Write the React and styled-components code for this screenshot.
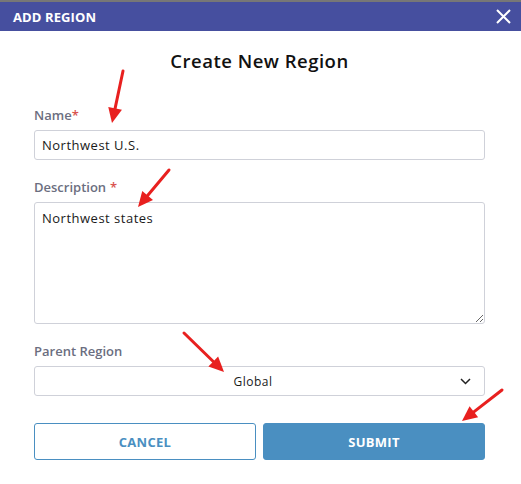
import React from "react";
import styled, { createGlobalStyle } from "styled-components";

const Global = createGlobalStyle`
  html, body { margin: 0; padding: 0; background: #fff; }
  body { font-family: "Open Sans", "Noto Sans", sans-serif; }
  * { box-sizing: border-box; }
`;

const Page = styled.div`
  position: relative;
  width: 521px;
  height: 484px;
  border-top: 2px solid #777;
  background: #fff;
`;

const Header = styled.div`
  height: 29px;
  background: #464f9f;
  display: flex;
  align-items: center;
  justify-content: space-between;
  padding: 0 10px 0 13px;
`;

const HeaderTitle = styled.div`
  color: #fff;
  font-size: 13px;
  font-weight: 700;
  letter-spacing: 0.1px;
`;

const CloseBtn = styled.button`
  background: none;
  border: 0;
  padding: 0;
  width: 16px;
  height: 16px;
  display: flex;
  align-items: center;
  justify-content: center;
  cursor: pointer;
`;

const Body = styled.div`
  padding: 18px 36px 0 34px;
  display: flex;
  flex-direction: column;
`;

const Title = styled.h1`
  margin: 0 0 34px;
  text-align: center;
  font-size: 18.5px;
  line-height: 24px;
  font-weight: 600;
  letter-spacing: 0.5px;
  color: #111;
`;

const Field = styled.div`
  display: flex;
  flex-direction: column;
  margin-bottom: ${(p) => p.$gap || 19}px;
`;

const Label = styled.label`
  font-size: 13px;
  line-height: 16px;
  font-weight: 600;
  color: #6b6e80;
  margin-bottom: 7px;
`;

const Req = styled.span`
  color: #d9534f;
  margin-left: ${(p) => (p.$space ? 4 : 0)}px;
`;

const controlBase = `
  width: 100%;
  border: 1px solid #cfd1d9;
  border-radius: 3px;
  font-family: "Open Sans", "Noto Sans", sans-serif;
  font-size: 13px;
  letter-spacing: 0.5px;
  color: #1a1a1a;
  background: #fff;
  outline: none;
`;

const Input = styled.input`
  ${controlBase}
  height: 30px;
  padding: 0 7px;
`;

const TextArea = styled.textarea`
  ${controlBase}
  height: 122px;
  padding: 6px 7px;
  resize: vertical;
  line-height: 18px;
`;

const Select = styled.div`
  ${controlBase}
  height: 30px;
  display: flex;
  align-items: center;
  padding: 0 13px 0 7px;
`;

const SelectValue = styled.div`
  flex: 1;
  text-align: center;
  font-size: 12px;
  padding-left: 4px;
`;

const Buttons = styled.div`
  display: grid;
  grid-template-columns: 1fr 1fr;
  gap: 7px;
`;

const Button = styled.button`
  height: 37px;
  border-radius: 3px;
  font-family: "Open Sans", "Noto Sans", sans-serif;
  font-size: 13px;
  font-weight: 700;
  letter-spacing: 0.3px;
  cursor: pointer;
  border: 1px solid #4a8fc1;
  background: ${(p) => (p.$primary ? "#4a8fc1" : "#fff")};
  color: ${(p) => (p.$primary ? "#fff" : "#4a8fc1")};
`;

const Overlay = styled.svg`
  position: absolute;
  left: 0;
  top: -2px;
  pointer-events: none;
`;

const arrows = [
  [123, 71, 112, 123],
  [169, 170, 138, 207],
  [184, 333, 224, 372],
  [502, 390, 462, 421],
];

function Arrow({ x1, y1, x2, y2 }) {
  const dx = x2 - x1;
  const dy = y2 - y1;
  const len = Math.hypot(dx, dy);
  const ux = dx / len;
  const uy = dy / len;
  const headLen = 15;
  const headW = 7;
  const bx = x2 - ux * headLen;
  const by = y2 - uy * headLen;
  const px = -uy;
  const py = ux;
  return (
    <g>
      <line x1={x1} y1={y1} x2={bx} y2={by} stroke="#e8201f" strokeWidth="3" strokeLinecap="round" />
      <polygon
        points={`${x2},${y2} ${bx + px * headW},${by + py * headW} ${bx - px * headW},${by - py * headW}`}
        fill="#e8201f"
      />
    </g>
  );
}

export default function App() {
  return (
    <>
      <Global />
      <Page>
        <Header>
          <HeaderTitle>ADD REGION</HeaderTitle>
          <CloseBtn aria-label="close">
            <svg width="15" height="15" viewBox="0 0 15 15">
              <path d="M1 1L14 14M14 1L1 14" stroke="#fff" strokeWidth="2" />
            </svg>
          </CloseBtn>
        </Header>
        <Body>
          <Title>Create New Region</Title>
          <Field>
            <Label>
              Name<Req>*</Req>
            </Label>
            <Input defaultValue="Northwest U.S." />
          </Field>
          <Field>
            <Label>
              Description<Req $space>*</Req>
            </Label>
            <TextArea defaultValue="Northwest states" />
          </Field>
          <Field $gap={27}>
            <Label>Parent Region</Label>
            <Select>
              <SelectValue>Global</SelectValue>
              <svg width="11" height="7" viewBox="0 0 11 7">
                <path d="M1 1L5.5 5.5L10 1" stroke="#222" strokeWidth="1.5" fill="none" />
              </svg>
            </Select>
          </Field>
          <Buttons>
            <Button>CANCEL</Button>
            <Button $primary>SUBMIT</Button>
          </Buttons>
        </Body>
        <Overlay width="521" height="484">
          {arrows.map(([a, b, c, d], i) => (
            <Arrow key={i} x1={a} y1={b} x2={c} y2={d} />
          ))}
        </Overlay>
      </Page>
    </>
  );
}
